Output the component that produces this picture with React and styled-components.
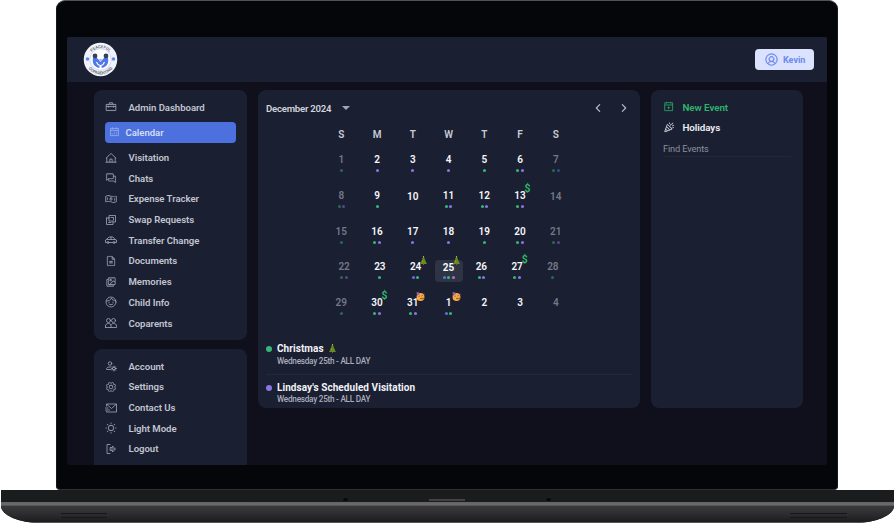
import React from 'react';
import styled, { createGlobalStyle, css } from 'styled-components';
import {
  PiToolboxLight, PiCalendarDotsLight, PiHouseLineLight, PiChatsLight, PiMoneyWavyLight,
  PiFileTextLight, PiImagesSquareLight, PiGearLight, PiSunLight, PiUserCircleLight,
  PiCalendarPlusLight, PiConfettiLight,
} from 'react-icons/pi';

const Global = createGlobalStyle`
  * { box-sizing: border-box; }
  body { margin: 0; background: #fff; font-family: Roboto, "Liberation Sans", sans-serif; }
`;

const Stage = styled.div`
  width: 894px;
  height: 524px;
  overflow: hidden;
  display: flex;
  flex-direction: column;
  align-items: center;
`;
const Lid = styled.div`
  width: 782px;
  height: 490px;
  flex: none;
  padding: 36px 10px 0;
  background: #040609;
  border: 1px solid #15171b;
  border-top-color: #505254;
  border-bottom-color: #303134;
  border-radius: 9px 9px 4px 4px;
`;
const Screen = styled.div`
  width: 760px;
  height: 428px;
  overflow: hidden;
  border-radius: 2px;
  background: #0f101c;
`;
const Header = styled.header`
  height: 45px;
  display: flex;
  align-items: center;
  justify-content: space-between;
  padding: 0 13px 0 16px;
  background: #1a1f32;
`;
const UserButton = styled.div`
  width: 59px;
  height: 21px;
  display: flex;
  align-items: center;
  gap: 4px;
  padding-left: 9px;
  border-radius: 4px;
  background: #dbe2fd;
  color: #6c89ee;
  font-size: 9px;
  font-weight: 700;
  svg { stroke: currentColor; stroke-width: 7px; }
`;
const Body = styled.main`
  display: flex;
  align-items: flex-start;
  gap: 11px;
  padding: 8px 24px 0 27px;
`;
const Sidebar = styled.nav`
  width: 153px;
  display: flex;
  flex-direction: column;
  gap: 9px;
`;
const Card = styled.section`
  background: #1a1f32;
  border-radius: 8px;
`;
const Menu = styled(Card)`
  height: ${(p) => p.$height}px;
  padding: 6.8px 11px 0;
`;
const MenuItem = styled.div`
  height: 20.7px;
  display: flex;
  align-items: center;
  color: #c2c5d0;
  font-size: 9.6px;
  font-weight: 600;
  letter-spacing: -0.04px;
  white-space: nowrap;
  svg {
    width: 12px;
    height: 12px;
    margin-right: 11.5px;
    color: #a4a8b5;
    flex: none;
  }
  svg[fill="currentColor"] { stroke: currentColor; stroke-width: 4px; }
  ${(p) => p.$active && css`
    height: 21.4px;
    margin: 4.1px 0 4.2px;
    padding-left: 4px;
    border-radius: 4px;
    background: #4c71df;
    color: #d5dcf4;
    svg { width: 11px; margin-right: 5.5px; color: #abbcf0; }
  `}
`;
const Calendar = styled(Card)`
  width: 382px;
  height: 317.5px;
  overflow: hidden;
`;
const MonthBar = styled.div`
  height: 36px;
  display: flex;
  align-items: center;
  padding: 0 11px 0 8px;
  color: #d3d5dc;
  font-size: 9.6px;
  font-weight: 600;
  letter-spacing: -0.22px;
`;
const Caret = styled.span`
  margin-left: 11px;
  border: 4px solid transparent;
  border-top-color: #a3a6b2;
  border-bottom: 0;
`;
const Arrows = styled.div`
  margin-left: auto;
  display: flex;
  gap: 16px;
  color: #b9bcc6;
`;
const Week = styled.div`
  height: ${(p) => (p.$head ? 18 : 35.75)}px;
  display: flex;
  justify-content: center;
  margin-left: -1px;
`;
const Day = styled.div`
  position: relative;
  width: ${(p) => (p.$selected ? 30 : 35.75)}px;
  display: flex;
  flex-direction: column;
  align-items: center;
  padding-top: ${(p) => (p.$head ? 3.4 : p.$plain ? 11 : 10)}px;
  color: ${(p) => (p.$head ? '#c9ccd5' : p.$muted ? '#747886' : '#f6f7fb')};
  font-size: 10px;
  line-height: 12px;
  font-weight: 600;
  letter-spacing: -0.05px;
`;
const Highlight = styled.div`
  width: 28px;
  height: 22px;
  margin-top: -1px;
  padding-top: 1.4px;
  border-radius: 4px;
  display: flex;
  flex-direction: column;
  align-items: center;
  background: #2f3445;
  font-weight: 700;
`;
const Dots = styled.div`
  display: flex;
  gap: 1.5px;
  margin-top: ${(p) => (p.$tight ? 2 : 3.2)}px;
  opacity: ${(p) => (p.$muted ? 0.5 : 1)};
`;
const dotColors = { g: '#39b577', p: '#8a75e5', b: '#5577dc', v: '#a96ddd' };
const Dot = styled.i`
  width: ${(p) => p.$size || 3}px;
  height: ${(p) => p.$size || 3}px;
  border-radius: 50%;
  background: ${(p) => dotColors[p.$c]};
`;
const Badge = styled.span`
  position: absolute;
  top: ${(p) => ({ party: 4.5, tree: 5, money: 3 })[p.$kind]}px;
  left: calc(50% + ${(p) => ({ party: 3, tree: 4, money: 4.5 })[p.$kind]}px);
  display: flex;
  color: #2ebc6b;
  font-size: 10.5px;
  line-height: 12px;
`;
const EventRow = styled.div`
  display: flex;
  align-items: flex-start;
  gap: 5px;
  margin: 0 8px;
  height: ${(p) => (p.$first ? 32.5 : 32)}px;
  padding-top: ${(p) => (p.$first ? 0 : 6.5)}px;
  border-bottom: ${(p) => (p.$first ? '1px solid #23283b' : 'none')};
`;
const EventDot = styled(Dot)`
  margin-top: 3.5px;
`;
const EventTitle = styled.div`
  height: ${(p) => (p.$first ? 14 : 13)}px;
  display: flex;
  gap: 5px;
  align-items: flex-start;
  color: #f2f3f7;
  font-size: 10px;
  line-height: 13px;
  font-weight: 700;
  letter-spacing: 0.06px;
  svg { margin-top: 2px; }
`;
const EventTime = styled.div`
  color: #aaaebb;
  font-size: 8.2px;
  line-height: 11px;
  font-weight: 500;
  letter-spacing: -0.25px;
`;
const Agenda = styled.div`
  padding-top: 19.5px;
`;
const Side = styled(Card)`
  width: 152px;
  height: 317.5px;
  padding: 6.5px 12px;
`;
const Action = styled.div`
  height: ${(p) => (p.$green ? 21 : 20.5)}px;
  display: flex;
  align-items: center;
  gap: 8px;
  color: ${(p) => (p.$green ? '#2fb56d' : '#eff0f5')};
  font-size: 9.8px;
  font-weight: 600;
  letter-spacing: -0.07px;
  svg { width: 11.5px; height: 11.5px; stroke: currentColor; stroke-width: 5px; }
`;
const Search = styled.div`
  height: 19px;
  padding-top: 5px;
  border-bottom: 1px solid #23283a;
  color: #8b8f9c;
  font-size: 9.2px;
  line-height: 12px;
  letter-spacing: -0.12px;
`;
const Base = styled.div`
  width: 893px;
  height: 33px;
  flex: none;
  display: flex;
  flex-direction: column;
  overflow: hidden;
  border-radius: 0 0 40px 40px / 0 0 17px 17px;
  background: #1b1c1d;
`;
const Deck = styled.div`
  height: 12px;
  display: flex;
  align-items: flex-end;
  justify-content: center;
  gap: 81px;
  padding-bottom: 1px;
  background: #1b1c1d;
`;
const Foot = styled.i`
  width: 5px;
  height: 3px;
  border-radius: 50%;
  background: #08090a;
`;
const Notch = styled.i`
  width: 36px;
  height: 2px;
  background: #414143;
`;
const Edge = styled.div`
  height: 4px;
  background: linear-gradient(#626263, #6c6c6d 60%, #4c4c4e);
`;
const Underside = styled.div`
  flex: 1;
  display: flex;
  justify-content: space-between;
  padding: 7px 47px 0 60px;
  border-bottom: 1px solid #555658;
  background: linear-gradient(#39393b, #2d2d2f 50%, #1c1c1e);
`;
const Vent = styled.i`
  width: ${(p) => p.$w}px;
  height: 5px;
  border: 1px solid #171719;
  border-width: 1px 0;
`;

const Svg = ({ children, ...rest }) => (
  <svg viewBox="0 0 24 24" fill="none" stroke="currentColor" strokeWidth="1.6" strokeLinecap="round" strokeLinejoin="round" {...rest}>{children}</svg>
);
const SwapIcon = () => (
  <Svg><path d="M8 7V3h13v13h-5M3 8h5M3 8v13h13v-5M8 7v7h8M12 7h5v5M7 17h5" /></Svg>
);
const CarIcon = () => (
  <Svg><path d="M4 17H1v-5l3-2 4-4h8l4 5 3 1v5h-3M8 17h8M4 11h16M12 6v5" /><circle cx="6" cy="17" r="2" /><circle cx="18" cy="17" r="2" /></Svg>
);
const FaceIcon = () => (
  <Svg><circle cx="12" cy="12" r="10" /><path d="M3 10c5 0 8-2 10-6 1 4 4 5 8 5M8 16c2 2 6 2 8 0M8 12v1M16 12v1" /></Svg>
);
const UsersIcon = () => (
  <Svg><circle cx="7" cy="7" r="4" /><circle cx="17" cy="7" r="4" /><path d="M1 21v-3c0-3 2-5 6-5s5 2 5 5v3H1M12 16c1-2 2-3 5-3 4 0 6 2 6 5v3H12" /></Svg>
);
const AccountIcon = () => (
  <Svg><circle cx="10" cy="7" r="3.5" /><path d="M12 14H8c-3 0-5 2-5 5h9" /><circle cx="18" cy="17" r="3" /><path d="M18 12v2m0 6v2m-5-5h2m6 0h2M14.5 13.5 16 15m4 4 1.5 1.5m0-7L20 15m-4 4-1.5 1.5" /></Svg>
);
const MailIcon = () => (
  <Svg><path d="M3 8V4h20v16H3v-1M4 5l9 8 9-8M1 12h5M1 16h8" /></Svg>
);
const LogoutIcon = () => (
  <Svg><path d="M10 3H4v18h6M11 9h4V6l6 6-6 6v-3h-4zM12 12h7" /></Svg>
);

const Tree = () => (
  <svg width="7" height="9" viewBox="0 0 14 18">
    <path d="M6 14h2v4H6z" fill="#8a5a2b" />
    <path d="M7 1 10 6H9l3 5h-1l3 5H0l3-5H2l3-5H4z" fill="#628c20" />
    <circle cx="5" cy="10" r="1" fill="#d3a930" /><circle cx="9" cy="13" r="1" fill="#c36331" /><circle cx="7" cy="1.5" r="1.3" fill="#cfbd36" />
  </svg>
);
const Party = () => (
  <svg width="9" height="9" viewBox="0 0 18 18">
    <circle cx="9" cy="10" r="7.9" fill="#f6ae42" />
    <path d="M1 0l8 2-7 6z" fill="#8c58b7" /><path d="m3 1 3 1-3 3z" fill="#db6190" />
    <path d="M5 9q2-2 3 0M11 8q2-2 3 0" stroke="#56331d" strokeWidth="1.2" fill="none" />
    <path d="M11 12l5-1v3l-4 1z" fill="#cf5945" /><circle cx="10" cy="13" r="1.4" fill="#75401f" /><circle cx="16" cy="4" r="1.2" fill="#d9567d" />
  </svg>
);
const badges = { money: '$', tree: <Tree />, party: <Party /> };

const Logo = () => (
  <svg width="35" height="35" viewBox="0 0 70 70">
    <defs>
      <path id="arcTop" d="M12 35a23 23 0 0 1 46 0" />
      <path id="arcBottom" d="M5 35a30 30 0 0 0 60 0" />
    </defs>
    <circle cx="35" cy="35" r="33.5" fill="#f1f3fa" />
    <circle cx="35" cy="35" r="21.5" fill="#fff" stroke="#c3cff5" strokeWidth="1.5" />
    <g fontFamily="Roboto, sans-serif" fontSize="8.2" fontWeight="600" fill="#66686f" textAnchor="middle">
      <text><textPath href="#arcTop" startOffset="50%">PEACEFUL</textPath></text>
      <text><textPath href="#arcBottom" startOffset="50%">COPARENTING</textPath></text>
    </g>
    <circle cx="9" cy="34" r="3.6" fill="#638bec" /><circle cx="61" cy="34" r="3.6" fill="#638bec" />
    <path d="M20 31q6-3 10 3l5 6 5-6q4-6 10-3 2 10-3 16-5 5-12 5t-12-5q-5-6-3-16z" fill="#4f79e8" />
    <circle cx="24" cy="28" r="4.8" fill="#34405d" /><circle cx="46" cy="28" r="4.8" fill="#34405d" />
    <path d="M27 40q2 6 7 7v6M43 40q-2 6-7 7v6" fill="none" stroke="#fff" strokeWidth="2.2" />
    <circle cx="35" cy="36" r="2.6" fill="#9db6f4" />
  </svg>
);

const mainMenu = [
  [PiToolboxLight, 'Admin Dashboard'], [PiCalendarDotsLight, 'Calendar'], [PiHouseLineLight, 'Visitation'],
  [PiChatsLight, 'Chats'], [PiMoneyWavyLight, 'Expense Tracker'], [SwapIcon, 'Swap Requests'],
  [CarIcon, 'Transfer Change'], [PiFileTextLight, 'Documents'], [PiImagesSquareLight, 'Memories'],
  [FaceIcon, 'Child Info'], [UsersIcon, 'Coparents'],
];
const accountMenu = [
  [AccountIcon, 'Account'], [PiGearLight, 'Settings'], [MailIcon, 'Contact Us'], [PiSunLight, 'Light Mode'], [LogoutIcon, 'Logout'],
];
const weeks = [
  [[1, 'g'], [2, 'p'], [3, 'p'], [4, 'p'], [5, 'g'], [6, 'gp'], [7, 'gb']],
  [[8, 'gp'], [9, 'g'], [10, ''], [11, 'gp'], [12, 'gp'], [13, 'gp', 'money'], [14, '']],
  [[15, 'g'], [16, 'gp'], [17, 'p'], [18, 'p'], [19, 'g'], [20, 'gp'], [21, 'gp']],
  [[22, 'gp'], [23, 'g'], [24, 'bg', 'tree'], [25, 'bgv', 'tree', true], [26, 'gp'], [27, 'gp', 'money'], [28, 'g']],
  [[29, 'g'], [30, 'gp', 'money'], [31, 'gp', 'party'], [1, 'bg', 'party'], [2, ''], [3, ''], [4, '']],
];

const MenuCard = ({ items, height }) => (
  <Menu $height={height}>
    {items.map(([Icon, label]) => (
      <MenuItem key={label} $active={label === 'Calendar'}><Icon />{label}</MenuItem>
    ))}
  </Menu>
);

const DayCell = ({ data: [n, dots, badge, selected], muted, last }) => {
  const content = (
    <>
      {n}
      {dots && <Dots $muted={muted} $tight={selected}>{[...dots].map((c, i) => <Dot key={i} $c={c} />)}</Dots>}
    </>
  );
  return (
    <Day $muted={muted} $selected={selected} $plain={!dots && !last}>
      {selected ? <Highlight>{content}</Highlight> : content}
      {badge && <Badge $kind={badge}>{badges[badge]}</Badge>}
    </Day>
  );
};

export default function App() {
  return (
    <Stage>
      <Global />
      <Lid>
        <Screen>
          <Header>
            <Logo />
            <UserButton><PiUserCircleLight size={15} />Kevin</UserButton>
          </Header>
          <Body>
            <Sidebar>
              <MenuCard items={mainMenu} height={250} />
              <MenuCard items={accountMenu} height={130} />
            </Sidebar>
            <Calendar>
              <MonthBar>
                December 2024<Caret />
                <Arrows>
                  <Svg width="10" height="10" strokeWidth="2.8"><path d="M16 4 8 12l8 8" /></Svg>
                  <Svg width="10" height="10" strokeWidth="2.8"><path d="m8 4 8 8-8 8" /></Svg>
                </Arrows>
              </MonthBar>
              <Week $head>
                {[...'SMTWTFS'].map((d, i) => <Day key={i} $head>{d}</Day>)}
              </Week>
              {weeks.map((week, w) => (
                <Week key={w}>
                  {week.map((d, i) => (
                    <DayCell key={i} data={d} muted={i === 0 || i === 6} last={w === 4} />
                  ))}
                </Week>
              ))}
              <Agenda>
                <EventRow $first>
                  <EventDot $c="g" $size={6} />
                  <div>
                    <EventTitle $first>Christmas <Tree /></EventTitle>
                    <EventTime>Wednesday 25th - ALL DAY</EventTime>
                  </div>
                </EventRow>
                <EventRow>
                  <EventDot $c="p" $size={6} />
                  <div>
                    <EventTitle>Lindsay's Scheduled Visitation</EventTitle>
                    <EventTime>Wednesday 25th - ALL DAY</EventTime>
                  </div>
                </EventRow>
              </Agenda>
            </Calendar>
            <Side>
              <Action $green><PiCalendarPlusLight />New Event</Action>
              <Action><PiConfettiLight />Holidays</Action>
              <Search>Find Events</Search>
            </Side>
          </Body>
        </Screen>
      </Lid>
      <Base>
        <Deck><Foot /><Notch /><Foot /></Deck>
        <Edge />
        <Underside><Vent $w={46} /><Vent $w={57} /></Underside>
      </Base>
    </Stage>
  );
}
